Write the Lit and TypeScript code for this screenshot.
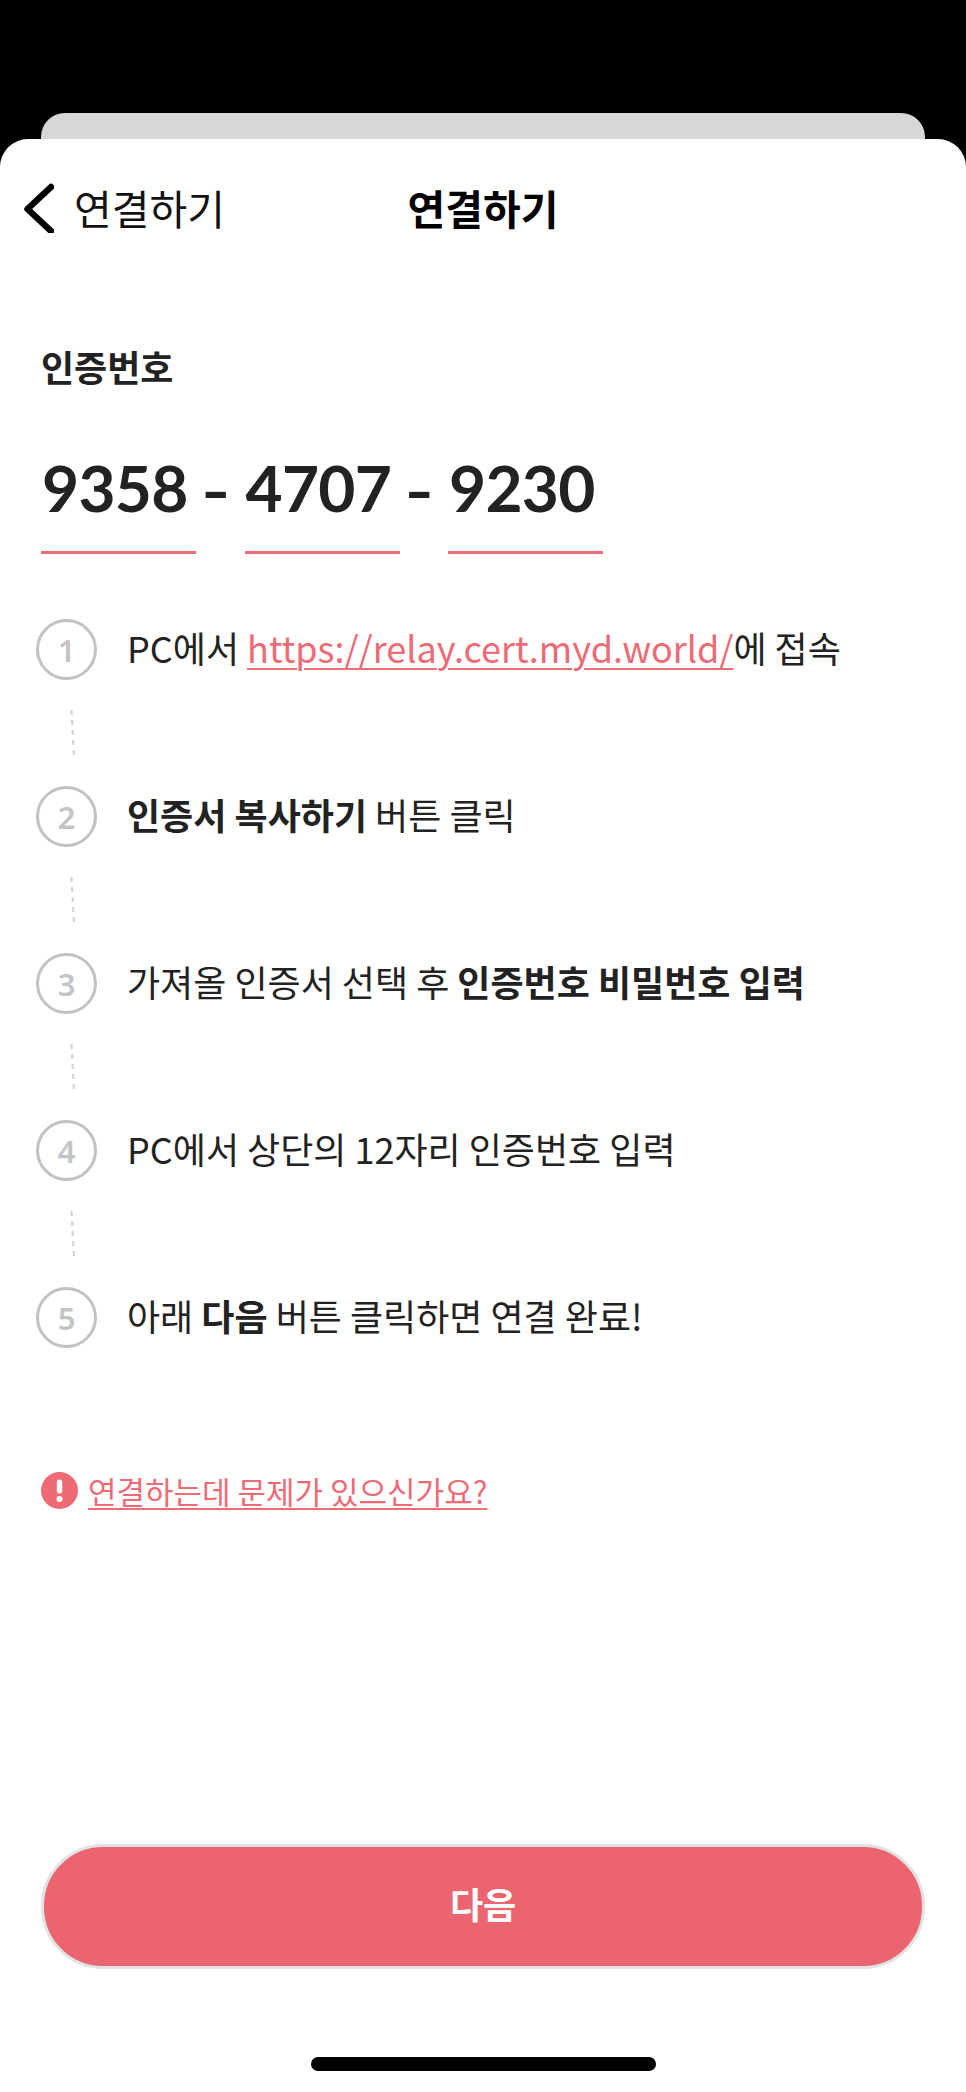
import { LitElement, html, css, svg } from "lit";
import { customElement } from "lit/decorators.js";

@customElement("app-root")
export class AppRoot extends LitElement {
  static styles = css`
    :host {
      display: flex;
      flex-direction: column;
      width: 966px;
      height: 2092px;
      background: #000;
      overflow: hidden;
      padding-top: 113px;
      box-sizing: border-box;
      font-family: "Noto Sans CJK KR", "Noto Sans", sans-serif;
      color: #222;
    }
    .back-sheet {
      height: 26px;
      margin: 0 41px;
      background: #d8d8d8;
      border-radius: 24px 24px 0 0;
      flex: none;
    }
    .card {
      flex: 1;
      display: flex;
      flex-direction: column;
      background: #fff;
      border-radius: 28px 28px 0 0;
      min-height: 0;
    }
    .header {
      display: grid;
      grid-template-columns: 1fr auto 1fr;
      align-items: center;
      height: 71px;
      margin-top: 33px;
      padding-bottom: 1px;
      color: #000;
    }
    .back {
      display: flex;
      align-items: center;
      gap: 20px;
      padding-left: 24px;
      font-size: 41px;
      line-height: 71px;
      color: #111;
    }
    .chevron { width: 30px; height: 50px; flex: none; }
    .title {
      font-size: 41px;
      font-weight: 700;
      line-height: 71px;
    }
    .label {
      margin: 97px 0 0 41px;
      font-size: 36px;
      line-height: 50px;
      font-weight: 700;
    }
    .code {
      display: flex;
      margin: 52px 0 0 41px;
    }
    .seg {
      width: 155px;
      height: 111px;
      box-sizing: border-box;
      border-bottom: 3px solid #ee6a75;
      padding-left: 1px;
      font-family: Lato, sans-serif;
      font-weight: 700;
      font-size: 64px;
      line-height: 90px;
      letter-spacing: -0.7px;
      color: #222;
    }
    .dash {
      width: 48.5px;
      height: 88px;
      box-sizing: border-box;
      padding-right: 9px;
      text-align: center;
      font-family: Lato, sans-serif;
      font-weight: 400;
      font-size: 82px;
      line-height: 88px;
      color: #222;
    }
    .steps {
      display: flex;
      flex-direction: column;
      margin: 65px 0 0 36px;
    }
    .step {
      display: flex;
      align-items: center;
      height: 61px;
      gap: 30px;
      font-size: 36px;
      white-space: nowrap;
    }
    .step-text { padding-bottom: 6px; }
    .num {
      flex: none;
      width: 61px;
      height: 61px;
      box-sizing: border-box;
      border: 3px solid #c2c2c2;
      border-radius: 50%;
      display: flex;
      align-items: center;
      justify-content: center;
      font-family: "Noto Sans", sans-serif;
      font-size: 31px;
      font-weight: 600;
      color: #c4c4c4;
    }
    .step b { font-weight: 700; }
    .step a {
      color: #ee6a75;
      text-decoration: underline;
      text-underline-offset: 5px;
      text-decoration-thickness: 2px;
    }
    .conn {
      display: block;
      width: 6px;
      height: 47px;
      margin: 30px 0 29px 34px;
    }
    .help {
      display: flex;
      align-items: center;
      gap: 10px;
      margin: 121px 0 0 41px;
      height: 42px;
      font-size: 31px;
      color: #ee6a75;
      white-space: nowrap;
    }
    .help svg { width: 37px; height: 37px; flex: none; }
    .help a {
      color: inherit;
      text-decoration: underline;
      text-underline-offset: 4px;
      text-decoration-thickness: 2px;
    }
    .spacer { flex: 1; }
    .next {
      display: flex;
      align-items: center;
      justify-content: center;
      height: 125px;
      margin: 0 41px;
      box-sizing: border-box;
      background: #ea6570;
      border: 3px solid #e2e2e2;
      border-radius: 62px;
      font-size: 36px;
      line-height: 1;
      padding-bottom: 8px;
      font-weight: 700;
      color: #fff;
      flex: none;
    }
    .home {
      flex: none;
      width: 345px;
      height: 14px;
      margin: 88px auto 21px;
      background: #000;
      border-radius: 7px;
    }
  `;

  private connector() {
    return html`<svg class="conn" viewBox="0 0 6 47">${svg`
      <line x1="1.5" y1="0" x2="4" y2="47" stroke="#d4d4d4" stroke-width="2.2" stroke-dasharray="5 5" />
    `}</svg>`;
  }

  render() {
    const steps = [
      html`PC에서 <a>https://relay.cert.myd.world/</a>에 접속`,
      html`<b>인증서 복사하기</b> 버튼 클릭`,
      html`가져올 인증서 선택 후 <b>인증번호 비밀번호 입력</b>`,
      html`PC에서 상단의 12자리 인증번호 입력`,
      html`아래 <b>다음</b> 버튼 클릭하면 연결 완료!`,
    ];
    return html`
      <div class="back-sheet"></div>
      <div class="card">
        <div class="header">
          <div class="back">
            <svg class="chevron" viewBox="0 0 30 50">
              <path d="M27 4 L3.5 26 L27 48" fill="none" stroke="#000" stroke-width="6.5" stroke-linecap="round" stroke-linejoin="round" />
            </svg>
            <span>연결하기</span>
          </div>
          <div class="title">연결하기</div>
          <div></div>
        </div>
        <div class="label">인증번호</div>
        <div class="code">
          <div class="seg">9358</div>
          <div class="dash">-</div>
          <div class="seg">4707</div>
          <div class="dash">-</div>
          <div class="seg">9230</div>
        </div>
        <div class="steps">
          ${steps.map(
            (s, i) => html`
              <div class="step"><span class="num">${i + 1}</span><span class="step-text">${s}</span></div>
              ${i < steps.length - 1 ? this.connector() : ""}
            `
          )}
        </div>
        <div class="help">
          <svg viewBox="0 0 37 37">
            <circle cx="18.5" cy="18.5" r="18.5" fill="#ee6a75" />
            <rect x="15.8" y="7.5" width="5.4" height="14" rx="2.7" fill="#fff" />
            <circle cx="18.5" cy="27" r="3" fill="#fff" />
          </svg>
          <a>연결하는데 문제가 있으신가요?</a>
        </div>
        <div class="spacer"></div>
        <div class="next">다음</div>
        <div class="home"></div>
      </div>
    `;
  }
}
